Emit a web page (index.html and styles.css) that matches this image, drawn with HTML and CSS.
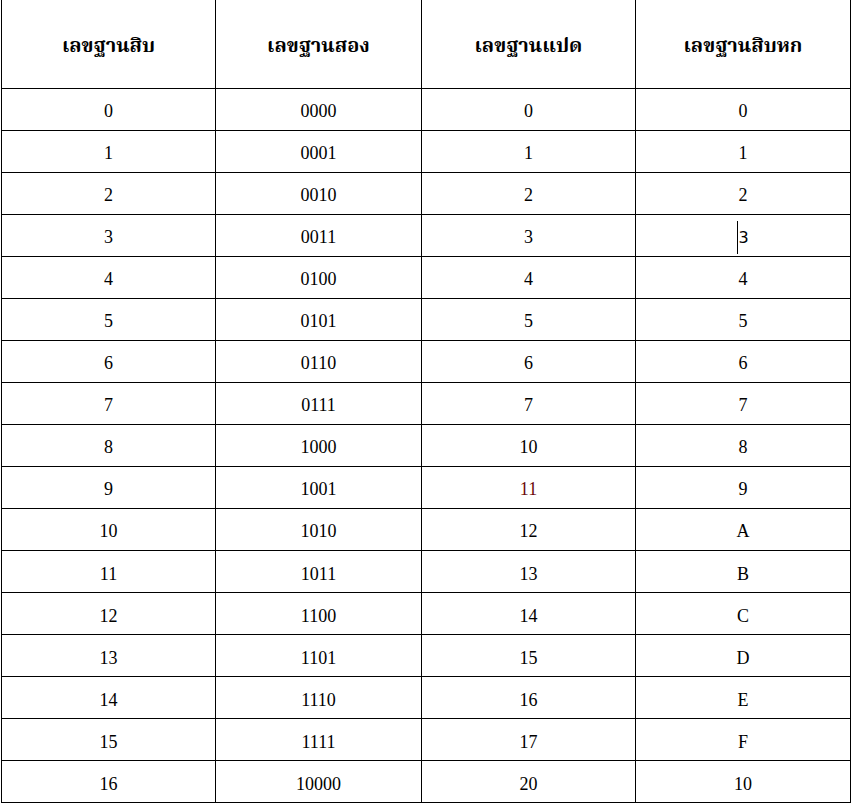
FILE: index.html
```html
<!DOCTYPE html>
<html lang="th">
<head>
<meta charset="utf-8">
<title>ตารางเลขฐาน</title>
<link rel="stylesheet" href="styles.css">
</head>
<body>
<table class="base-table">
  <colgroup>
    <col class="c1"><col class="c2"><col class="c3"><col class="c4">
  </colgroup>
  <thead>
    <tr><th>เลขฐานสิบ</th><th>เลขฐานสอง</th><th>เลขฐานแปด</th><th>เลขฐานสิบหก</th></tr>
  </thead>
  <tbody>
    <tr><td>0</td><td>0000</td><td>0</td><td>0</td></tr>
    <tr><td>1</td><td>0001</td><td>1</td><td>1</td></tr>
    <tr><td>2</td><td>0010</td><td>2</td><td>2</td></tr>
    <tr><td>3</td><td>0011</td><td>3</td><td><span class="caret">3</span></td></tr>
    <tr><td>4</td><td>0100</td><td>4</td><td>4</td></tr>
    <tr><td>5</td><td>0101</td><td>5</td><td>5</td></tr>
    <tr><td>6</td><td>0110</td><td>6</td><td>6</td></tr>
    <tr><td>7</td><td>0111</td><td>7</td><td>7</td></tr>
    <tr><td>8</td><td>1000</td><td>10</td><td>8</td></tr>
    <tr><td>9</td><td>1001</td><td class="red">11</td><td>9</td></tr>
    <tr><td>10</td><td>1010</td><td>12</td><td>A</td></tr>
    <tr><td>11</td><td>1011</td><td>13</td><td>B</td></tr>
    <tr><td>12</td><td>1100</td><td>14</td><td>C</td></tr>
    <tr><td>13</td><td>1101</td><td>15</td><td>D</td></tr>
    <tr><td>14</td><td>1110</td><td>16</td><td>E</td></tr>
    <tr><td>15</td><td>1111</td><td>17</td><td>F</td></tr>
    <tr><td>16</td><td>10000</td><td>20</td><td>10</td></tr>
  </tbody>
</table>
</body>
</html>
```
FILE: styles.css
```css
html, body {
  margin: 0;
  padding: 0;
  background: #ffffff;
}
body {
  padding-left: 1px;
  font-family: "Liberation Serif", "Noto Serif Thai", "Noto Sans Thai", serif;
  color: #000;
}
.base-table {
  border-collapse: collapse;
  table-layout: fixed;
  width: 850px;
}
.c1 { width: 214px; }
.c2 { width: 206px; }
.c3 { width: 214px; }
.c4 { width: 215px; }
.base-table th,
.base-table td {
  border: 1.5px solid #000;
  text-align: center;
  vertical-align: middle;
  box-sizing: border-box;
  line-height: 1;
}
.base-table th {
  border-top: none;
  height: 88px;
  padding: 2px 0 0;
  font-size: 20px;
  font-weight: bold;
}
.base-table td {
  height: 42.06px;
  padding: 4px 0 0;
  font-size: 18px;
}
.red { color: #6b0a0a; }
.caret {
  display: inline-block;
  font-family: "DejaVu Sans", sans-serif;
  font-size: 16px;
  border-left: 1.5px solid #000;
  padding: 9px 0 8px 0;
}
```
